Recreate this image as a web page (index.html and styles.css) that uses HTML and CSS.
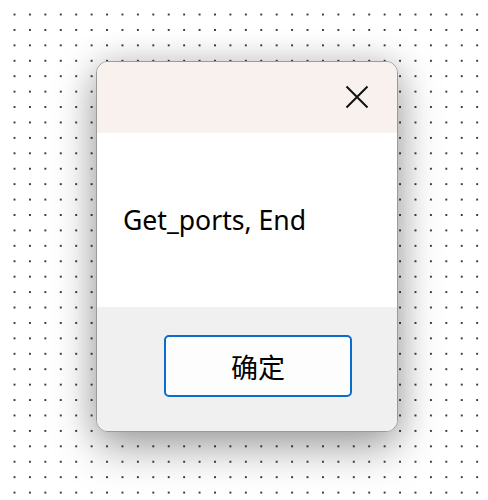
FILE: index.html
```html
<!DOCTYPE html>
<html>
<head>
<meta charset="utf-8">
<link rel="stylesheet" href="styles.css">
</head>
<body>
<div class="dialog">
  <div class="titlebar">
    <button class="close" aria-label="Close">
      <svg width="24" height="24" viewBox="0 0 24 24"><path d="M1.5 1.5 L22.5 22.5 M22.5 1.5 L1.5 22.5" stroke="#111" stroke-width="2" fill="none"/></svg>
    </button>
  </div>
  <div class="content">
    <p class="message">Get_ports, End</p>
  </div>
  <div class="footer">
    <button class="ok">确定</button>
  </div>
</div>
</body>
</html>
```
FILE: styles.css
```css
html, body {
  margin: 0;
  height: 100%;
}
body {
  background-color: #ffffff;
  background-image: radial-gradient(circle, #3a3a3a 0.9px, transparent 1.3px);
  background-size: 15.433px 15.433px;
  background-position: 6.8px 6.8px;
  padding: 61px 0 0 96px;
  box-sizing: border-box;
  font-family: "Noto Sans", "Open Sans", sans-serif;
}
.dialog {
  width: 302px;
  height: 371px;
  box-sizing: border-box;
  border: 1px solid #9a9a9a;
  border-radius: 12px;
  overflow: hidden;
  display: flex;
  flex-direction: column;
  box-shadow: 0 16px 44px rgba(0,0,0,0.34), 0 0 32px rgba(0,0,0,0.14);
  background: #fff;
}
.titlebar {
  height: 71px;
  background: #f8f1ed;
  display: flex;
  justify-content: flex-end;
  align-items: flex-start;
}
.close {
  border: 0;
  background: transparent;
  padding: 0;
  margin: 23px 28px 0 0;
  width: 24px;
  height: 24px;
  display: flex;
}
.content {
  height: 174px;
  display: flex;
  align-items: flex-start;
  padding-left: 26px;
}
.message {
  margin: 70px 0 0 0;
  font-family: "Noto Sans", sans-serif;
  font-size: 26.6px;
  color: #000;
  line-height: 34px;
}
.footer {
  flex: 1;
  background: #f0f0f0;
  padding: 28px 0 0 67px;
}
.ok {
  width: 188px;
  height: 62px;
  box-sizing: border-box;
  border: 2px solid #0a6ccf;
  border-radius: 5px;
  background: #fdfdfd;
  font-family: "Noto Sans CJK SC", sans-serif;
  font-size: 27px;
  color: #000;
  padding: 0;
}
```
